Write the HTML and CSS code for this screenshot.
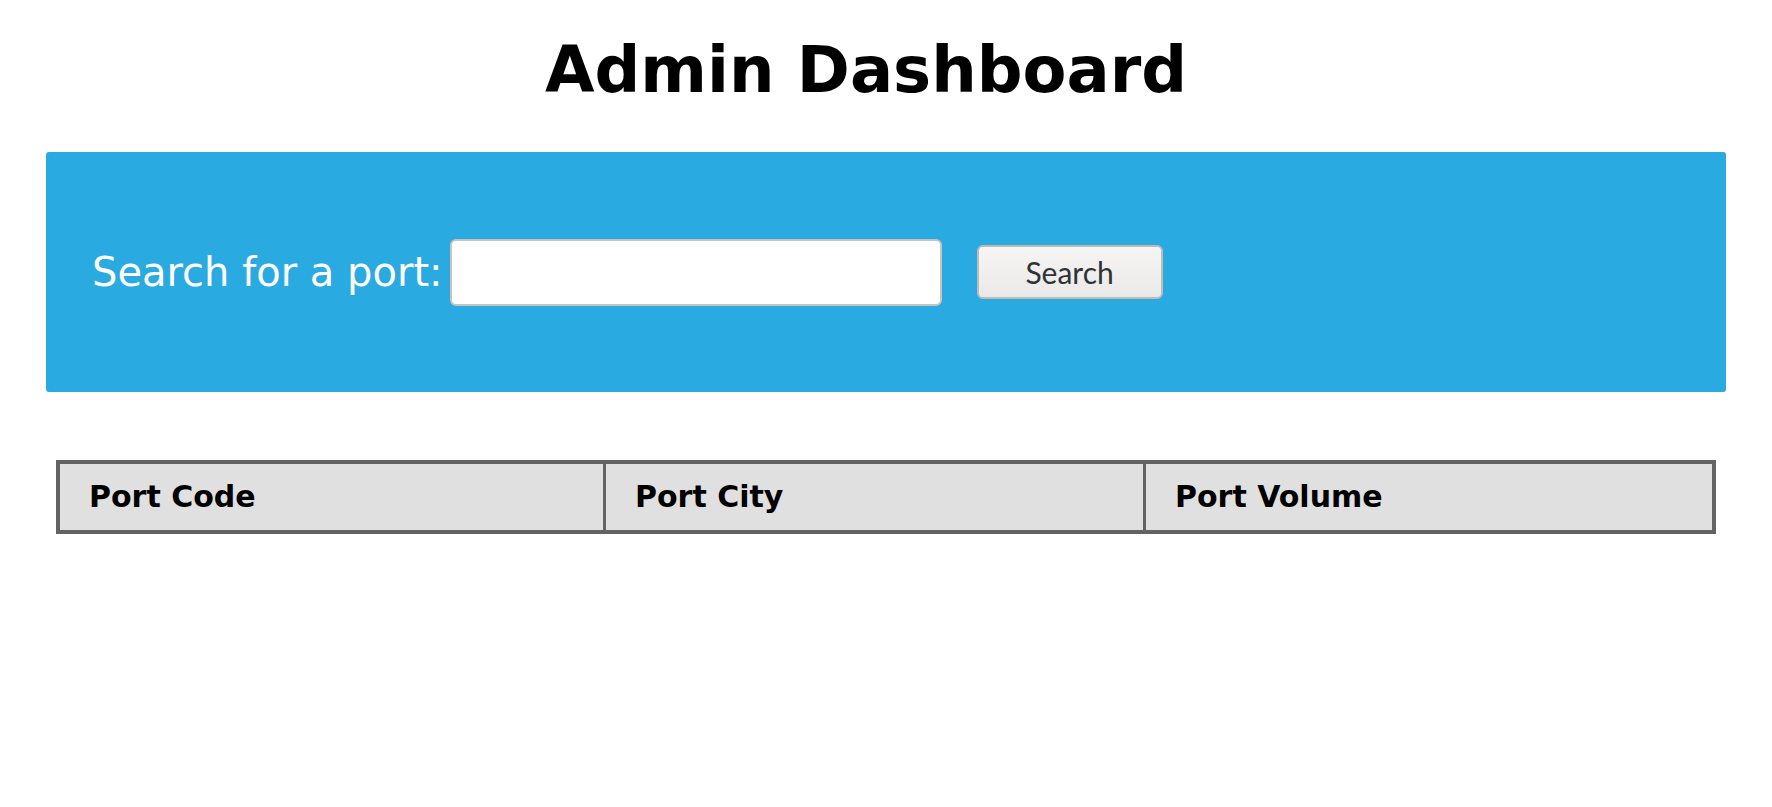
FILE: index.html
```html
<!DOCTYPE html>
<html lang="en">
<head>
<meta charset="utf-8">
<title>Admin Dashboard</title>
<link rel="stylesheet" href="styles.css">
</head>
<body>
  <h1 class="title">Admin Dashboard</h1>
  <div class="search-panel">
    <label class="search-label" for="port">Search for a port:</label>
    <input class="search-input" id="port" type="text">
    <button class="search-btn" type="button">Search</button>
  </div>
  <table class="ports">
    <colgroup>
      <col class="col-code">
      <col class="col-city">
      <col class="col-volume">
    </colgroup>
    <thead>
      <tr>
        <th>Port Code</th>
        <th>Port City</th>
        <th>Port Volume</th>
      </tr>
    </thead>
    <tbody></tbody>
  </table>
</body>
</html>
```

FILE: styles.css
```css
body {
  margin: 0;
  font-family: "DejaVu Sans", sans-serif;
  background: #ffffff;
}

.title {
  margin: 33px 0 0;
  padding-right: 40px;
  text-align: center;
  font-size: 64px;
  font-weight: bold;
  line-height: 75px;
  color: #000000;
}

.search-panel {
  margin: 44px 46px 0;
  height: 240px;
  box-sizing: border-box;
  padding-left: 46px;
  background: #29abe2;
  border-radius: 3px;
  display: flex;
  align-items: center;
}

.search-label {
  font-size: 40px;
  color: #ffffff;
  margin-right: 7px;
}

.search-input {
  width: 492px;
  height: 67px;
  box-sizing: border-box;
  border: 2px solid #c8c3be;
  border-radius: 6px;
  background: #ffffff;
  margin: 0 35px 0 0;
  padding: 0 8px;
  font-size: 24px;
  outline: none;
}

.search-btn {
  width: 186px;
  height: 54px;
  box-sizing: border-box;
  border: 2px solid #c0bbb6;
  border-radius: 6px;
  background: linear-gradient(#f6f5f4, #ebe9e7);
  font-family: Lato, "Open Sans", sans-serif;
  font-size: 30px;
  color: #2e3436;
  padding: 0;
}

.ports {
  margin: 68px 56px 0;
  width: calc(100% - 112px);
  table-layout: fixed;
  border-collapse: separate;
  border-spacing: 0;
  border: 4px solid #646262;
  background: #e0e0e0;
}

.col-code { width: 543px; }
.col-city { width: 540px; }
.col-volume { width: 569px; }

.ports th {
  text-align: left;
  font-size: 30px;
  font-weight: bold;
  line-height: 35px;
  padding: 15px 28px 16px 29px;
  color: #000000;
}

.ports th + th {
  border-left: 3px solid #646262;
}
```
